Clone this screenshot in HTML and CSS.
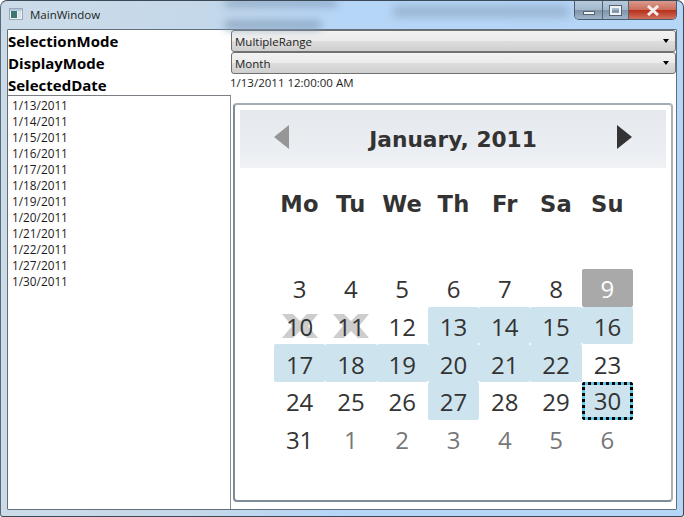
FILE: index.html
```html
<!DOCTYPE html>
<html lang="en">
<head>
<meta charset="utf-8">
<title>MainWindow</title>
<link rel="stylesheet" href="styles.css">
</head>
<body>
<div class="window">
  <div class="titlebar">
    <div class="blur-text blur-one"></div>
    <div class="blur-text blur-two"></div>
    <div class="blur-text blur-three"></div>
    <svg class="app-icon" width="14" height="12" viewBox="0 0 14 12">
      <rect x="0.5" y="0.5" width="13" height="11" fill="#eef2f6" stroke="#9aa6b2"/>
      <rect x="1" y="1" width="12" height="2" fill="#b3cbe2"/>
      <rect x="2" y="3" width="6" height="7" fill="#3f7570"/>
      <rect x="9" y="3" width="3" height="7" fill="#d5e0ec"/>
    </svg>
    <span class="title">MainWindow</span>
    <div class="caption">
      <div class="cap cap-min"><span class="min-glyph"></span></div>
      <div class="cap cap-max"><span class="max-glyph"></span></div>
      <div class="cap cap-close">
        <svg width="16" height="11" viewBox="0 0 16 11"><path d="M3 1 L13 10 M13 1 L3 10" stroke="#f4eeee" stroke-width="3" fill="none"/></svg>
      </div>
    </div>
  </div>
  <div class="client">
    <div class="left">
      <div class="label">SelectionMode</div>
      <div class="label">DisplayMode</div>
      <div class="label">SelectedDate</div>
      <div class="list">
        <div>1/13/2011</div><div>1/14/2011</div><div>1/15/2011</div><div>1/16/2011</div>
        <div>1/17/2011</div><div>1/18/2011</div><div>1/19/2011</div><div>1/20/2011</div>
        <div>1/21/2011</div><div>1/22/2011</div><div>1/27/2011</div><div>1/30/2011</div>
      </div>
    </div>
    <div class="right">
      <div class="combo"><span>MultipleRange</span><i class="arrow"></i></div>
      <div class="combo"><span>Month</span><i class="arrow"></i></div>
      <div class="selected">1/13/2011 12:00:00 AM</div>
      <div class="calendar">
        <div class="cal-head">
          <svg class="nav" width="16" height="24" viewBox="0 0 16 24"><path d="M15 0 V24 L0 12 Z" fill="#969696"/></svg>
          <span class="month">January, 2011</span>
          <svg class="nav" width="16" height="24" viewBox="0 0 16 24"><path d="M1 0 V24 L16 12 Z" fill="#333"/></svg>
        </div>
        <div class="days">
          <div class="dow">Mo</div><div class="dow">Tu</div><div class="dow">We</div><div class="dow">Th</div><div class="dow">Fr</div><div class="dow">Sa</div><div class="dow">Su</div>
          <div class="gap"></div>
          <div class="d">3</div><div class="d">4</div><div class="d">5</div><div class="d">6</div><div class="d">7</div><div class="d">8</div><div class="d today">9</div>
          <div class="d x">10<svg class="cross" viewBox="0 0 36 24"><path d="M0 0 H11 L18 7 L25 0 H36 L26 12 L36 24 H25 L18 17 L11 24 H0 L10 12 Z" fill="#cdcdcd"/></svg></div>
          <div class="d x">11<svg class="cross" viewBox="0 0 36 24"><path d="M0 0 H11 L18 7 L25 0 H36 L26 12 L36 24 H25 L18 17 L11 24 H0 L10 12 Z" fill="#cdcdcd"/></svg></div>
          <div class="d">12</div><div class="d s">13</div><div class="d s">14</div><div class="d s">15</div><div class="d s">16</div>
          <div class="d s">17</div><div class="d s">18</div><div class="d s">19</div><div class="d s">20</div><div class="d s">21</div><div class="d s">22</div><div class="d">23</div>
          <div class="d">24</div><div class="d">25</div><div class="d">26</div><div class="d s">27</div><div class="d">28</div><div class="d">29</div><div class="d s focus">30</div>
          <div class="d">31</div><div class="d o">1</div><div class="d o">2</div><div class="d o">3</div><div class="d o">4</div><div class="d o">5</div><div class="d o">6</div>
        </div>
      </div>
    </div>
  </div>
</div>
</body>
</html>
```
FILE: styles.css
```css
* { box-sizing: border-box; }
html, body { margin: 0; height: 100%; }
body { width: 684px; height: 517px; overflow: hidden; background: #fff; }
.window {
  width: 684px; height: 517px; display: flex; flex-direction: column;
  padding: 0 6px 6px 6px; overflow: hidden;
  border: 1px solid #3c4a58; border-radius: 7px 7px 3px 3px;
  border-left-color: #59697a;
  background: linear-gradient(90deg, #ccdbe8 0, #c4d8ea 30%, #b6d6f8 50%, #b6d6f8 100%);
  position: relative;
}
.titlebar {
  height: 28px; flex: none; display: flex; align-items: center; padding: 0 0 2px 2px;
  font: 11.5px "Open Sans", "Noto Sans", sans-serif; color: #1a1f24;
}
.blur-text { position: absolute; background: #7f9ab6; filter: blur(4px); opacity: .7; }
.blur-one { left: 224px; top: -2px; width: 112px; height: 8px; }
.blur-two { left: 224px; top: 19px; width: 96px; height: 10px; }
.blur-three { left: 392px; top: 5px; width: 176px; height: 11px; background: #8ba4be; filter: blur(5px); }
.app-icon { flex: none; }
.title { margin-left: 7px; }
.caption {
  position: absolute; top: 0; right: 6px; height: 19px; display: flex;
  border: 1px solid #4c5b6b; border-top: 0; border-radius: 0 0 5px 5px; overflow: hidden;
}
.cap { height: 18px; display: flex; align-items: center; justify-content: center; }
.cap-min { width: 28px; border-right: 1px solid #53626f; background: linear-gradient(#b6cadd 0, #a4b8cb 50%, #7e93a7 51%, #9fb5c9 100%); }
.cap-max { width: 26px; border-right: 1px solid #53626f; background: linear-gradient(#b6cadd 0, #a4b8cb 50%, #7e93a7 51%, #9fb5c9 100%); }
.cap-close { width: 47px; background: linear-gradient(#d99a8e 0, #cd6d5b 48%, #b8301c 52%, #d0705c 100%); }
.min-glyph { width: 12px; height: 4px; margin-top: 6px; background: #f0f4f7; border: 1px solid #55646f; }
.max-glyph { width: 11px; height: 9px; border: 2px solid #eef2f5; outline: 1px solid #55646f; }
.client {
  flex: 1; display: flex; min-height: 0; background: #fff;
  border: 1px solid #626e7a; border-radius: 1px;
}
.left { width: 223px; flex: none; display: flex; flex-direction: column; }
.label { height: 22px; flex: none; font: 700 15px/23px "Open Sans", "Noto Sans", sans-serif; color: #000; }
.list {
  flex: 1; margin-top: -1px; border: 1px solid #7a7f85; border-left-width: 0; border-bottom: 0; border-right-color: #8a8f94;
  padding: 1px 0 0 4px; background: #fff; font: 11.8px/16px "Open Sans", "Noto Sans", sans-serif; color: #1c1c1c;
}
.right { flex: 1; min-width: 0; display: flex; flex-direction: column; }
.combo {
  height: 22px; flex: none; display: flex; align-items: center; justify-content: space-between;
  padding: 0 6px 0 3px; font: 11.5px "Open Sans", "Noto Sans", sans-serif; color: #1c1c1c;
  border: 1px solid #707070; border-radius: 3px;
  background: linear-gradient(#f2f2f2 0, #ebebeb 50%, #dddddd 51%, #cfcfcf 100%);
}
.arrow { width: 0; height: 0; border-left: 3.5px solid transparent; border-right: 3.5px solid transparent; border-top: 4px solid #000; }
.selected { height: 22px; flex: none; margin-left: -1px; font: 11.5px/18px "Open Sans", "Noto Sans", sans-serif; color: #1c1c1c; }
.calendar {
  margin: 7px 3px 7px 2px; flex: 1; min-height: 0; padding: 5px;
  border: 2.5px solid #7f8b99; border-radius: 4px; background: #fff;
  border-top-color: #a4acb6; border-right-color: #a9b0ba;
  display: flex; flex-direction: column;
}
.cal-head {
  height: 58px; flex: none; display: flex; align-items: center; justify-content: space-between;
  padding: 0 34px; background: linear-gradient(#e5e8ed, #ebeef2 75%, #f0f2f5);
}
.nav { flex: none; margin-bottom: 4px; }
.month { font: 700 21.7px "DejaVu Sans", sans-serif; color: #333; }
.days {
  flex: 1; display: grid; grid-template-columns: repeat(7, 51.3px);
  grid-template-rows: 72px 29px repeat(5, 37.7px); justify-content: center; margin-left: 1px;
  font-family: "Open Sans", "Noto Sans", sans-serif; color: #333;
}
.dow { font: 700 22.6px/72px "DejaVu Sans", sans-serif; color: #333; text-align: center; letter-spacing: 0.3px; }
.gap { grid-column: 1 / -1; grid-row: 2; }
.d { position: relative; z-index: 0; display: flex; align-items: center; justify-content: center; padding-top: 2px; font-size: 24px; color: #333; border-radius: 2px; }
.s { background: #cde3ee; }
.today { background: #a9a9a9; color: #fff; }
.o { color: #777; }
.focus { border: 3px solid #5ec8ea; border-radius: 3px; padding-top: 0; }
.focus::after { content: ""; position: absolute; inset: -3px; border: 3px dotted #000; border-radius: 3px; }
.cross { position: absolute; left: 8px; top: 7px; width: 36px; height: 24px; z-index: -1; }
```
